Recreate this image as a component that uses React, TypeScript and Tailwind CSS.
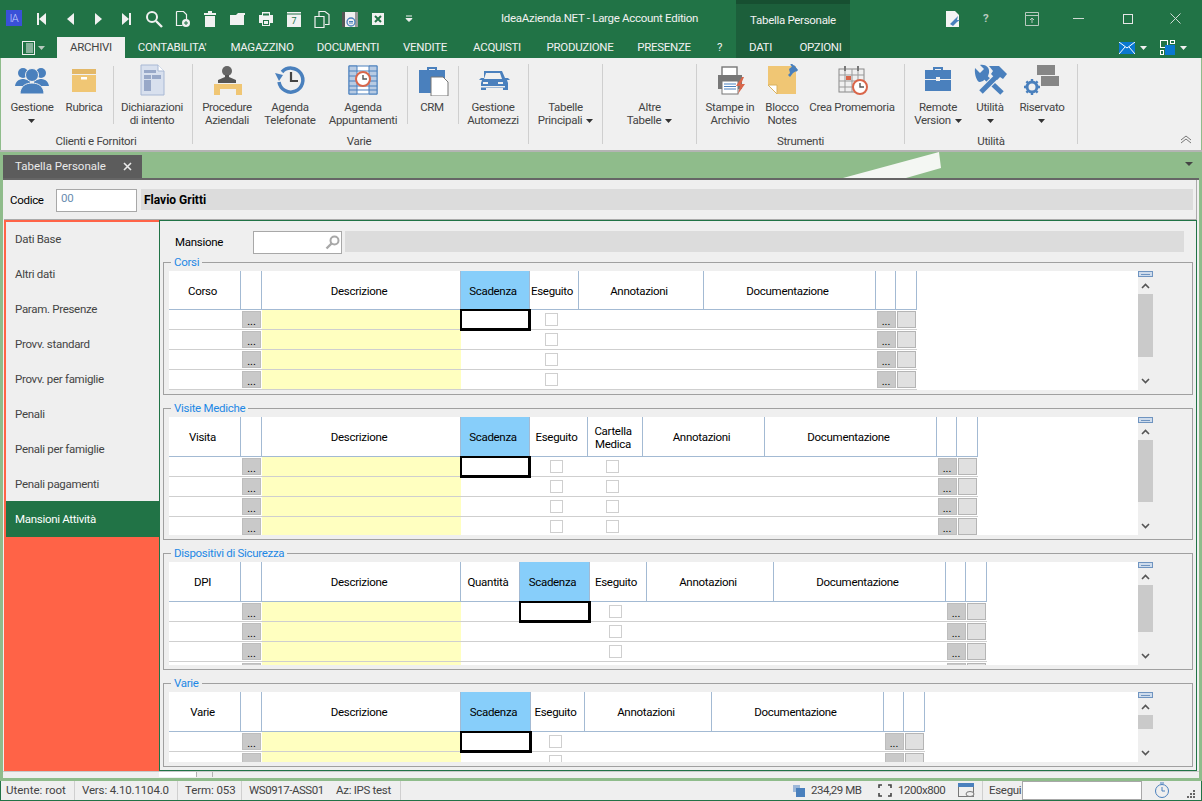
import React from "react";

type Kind = "plain" | "btn" | "yellow" | "date" | "check" | "box";
type Col = { w: number; label?: React.ReactNode; kind: Kind; blue?: boolean };

const Caret = ({ c = "#333" }: { c?: string }) => (
  <svg width="7" height="4" viewBox="0 0 7 4" className="inline-block"><path d="M0 0h7L3.5 4z" fill={c} /></svg>
);

const W = "#f1f1f1";
const TB = ({ children, w = 18 }: { children: React.ReactNode; w?: number }) => (
  <svg width={w} height="18" viewBox="0 0 18 18" className="block">{children}</svg>
);

const tools: React.ReactNode[] = [
  <TB key="a"><rect x="4" y="3" width="2" height="12" fill={W} /><path d="M13 3v12L6 9z" fill={W} /></TB>,
  <TB key="b"><path d="M13 3v12L6 9z" fill={W} /></TB>,
  <TB key="c"><path d="M6 3v12l7-6z" fill={W} /></TB>,
  <TB key="d"><rect x="12" y="3" width="2" height="12" fill={W} /><path d="M5 3v12l7-6z" fill={W} /></TB>,
  <TB key="e"><circle cx="7" cy="7" r="5" fill="none" stroke={W} strokeWidth="2" /><path d="M11 11l6 6" stroke={W} strokeWidth="2.4" /></TB>,
  <TB key="f"><path d="M3.5 1.5h7l3 3v5M3.5 1.5v14h6" fill="none" stroke={W} strokeWidth="1.2" /><circle cx="13" cy="13" r="4" fill={W} /><path d="M11 13h4M13 11v4" stroke="#217346" /></TB>,
  <TB key="g"><rect x="7" y="1" width="4" height="2" fill={W} /><rect x="3" y="3" width="12" height="2" fill={W} /><path d="M4 6h10v11H4z" fill={W} /></TB>,
  <TB key="h"><path d="M1 5h6l2-2h7v2l-1 0v10H1z" fill={W} /></TB>,
  <TB key="i"><path d="M5 2h8v3h3v8h-3v3H5v-3H2V5h3z" fill={W} /><rect x="6" y="3.5" width="6" height="2" fill="#217346" /><rect x="6" y="10" width="6" height="5" fill="#217346" /><rect x="7" y="11" width="4" height="3" fill={W} /></TB>,
  <TB key="j"><path d="M2 2h14v15H2z" fill={W} /><path d="M2 4h14" stroke="#217346" /><text x="9" y="14" fontSize="9" textAnchor="middle" fill="#217346" fontFamily="Roboto">7</text></TB>,
  <TB key="k"><path d="M2 6.5h9v11H2zM6 6V1.5h6l4 3v10h-4" fill="none" stroke={W} strokeWidth="1.2" /></TB>,
  <TB key="l"><rect x="1" y="2" width="16" height="15" fill={W} /><rect x="1" y="2" width="3" height="15" fill="#555" /><rect x="14" y="2" width="3" height="15" fill="#999" /><circle cx="10" cy="12" r="4" fill="none" stroke="#4a80bd" strokeWidth="1.3" /><path d="M8 11.5h4M8 13h4" stroke="#4a80bd" /></TB>,
  <TB key="m"><rect x="3" y="3" width="12" height="12" fill={W} /><path d="M6 6l6 6M12 6l-6 6" stroke="#217346" strokeWidth="2" /></TB>,
];

const B = "#4a80bd";
const T = "#f0c674";
const ICON = ({ children, w = 36, h = 32 }: { children: React.ReactNode; w?: number; h?: number }) => (
  <svg width={w} height={h} viewBox={`0 0 ${w} ${h}`} className="block">{children}</svg>
);

const Icons: Record<string, React.ReactNode> = {
  people: <ICON><circle cx="9" cy="9" r="5" fill={B} /><circle cx="27" cy="9" r="5" fill={B} /><path d="M1 22c1-6 5-7 9-7l6 2v5zM35 22c-1-6-5-7-9-7l-6 2v5z" fill={B} /><circle cx="18" cy="11" r="6.5" fill={B} stroke="#f0f0f0" /><path d="M6 30c0-8 6-11 12-11s12 3 12 11z" fill={B} stroke="#f0f0f0" /></ICON>,
  box: <ICON><rect x="6" y="5" width="24" height="5" fill="#e3b868" /><rect x="6" y="11" width="24" height="17" fill={T} /><rect x="15" y="13" width="6" height="2.5" fill="#fff" /></ICON>,
  doc: <ICON><path d="M7 1h17l6 6v24H7z" fill="#d8e0ee" stroke="#a8b8d4" /><path d="M24 1v6h6" fill="#fff" stroke="#a8b8d4" /><rect x="10" y="6" width="12" height="3" fill="#98a8c8" /><rect x="10" y="11" width="7" height="4" fill="#98a8c8" /><rect x="18" y="11" width="9" height="4" fill="#98a8c8" /><rect x="10" y="16" width="7" height="11" fill="#98a8c8" /></ICON>,
  desk: <ICON><circle cx="18" cy="7" r="5" fill="#666" /><path d="M16 11h4v2l7 3v3H9v-3l7-3z" fill="#555" /><path d="M5 20h28v11h-6v-6H11v6H5z" fill={T} /></ICON>,
  history: <ICON><path d="M10 8a12 12 0 1 1-3 10" fill="none" stroke={B} strokeWidth="3.5" /><path d="M4 11l8 2-4 6z" fill={B} transform="translate(-1 -2)" /><path d="M19 8v9h7" fill="none" stroke="#444" strokeWidth="2.2" /></ICON>,
  sched: <ICON><rect x="4" y="2" width="28" height="28" fill="#fff" stroke={B} /><path d="M4 2h8v28H4zM24 2h8v28h-8z" fill="#b8cbe3" stroke={B} /><path d="M4 7h28M4 12h28M4 17h28M4 22h28M4 26h28" stroke={B} /><circle cx="18" cy="15" r="7" fill="#fff" stroke="#d9664a" strokeWidth="2" /><path d="M18 11v4h4" fill="none" stroke="#555" strokeWidth="1.4" /></ICON>,
  crm: <ICON><path d="M13 3h10v3h-2V5h-6v1h-2z" fill={B} /><rect x="5" y="6" width="26" height="23" fill={B} /><path d="M17 13h12l5 5v14H17z" fill="#fff" stroke="#777" /></ICON>,
  car: <ICON><path d="M9 7h18l3 7h3l2 2h-3l1 3v7h-5v-2H11v2H6v-7l1-3H4l2-2h3z" fill={B} /><path d="M11 9h14l2 6H9z" fill="#f0f0f0" /><rect x="8" y="18" width="5" height="2" fill="#f0f0f0" /><rect x="23" y="18" width="5" height="2" fill="#f0f0f0" /><rect x="6" y="22" width="24" height="1.5" fill="#f0f0f0" /></ICON>,
  printer: <ICON><rect x="10" y="3" width="15" height="9" fill="#fff" stroke="#777" strokeWidth="1.4" /><path d="M6 11h24v14H6z" fill="#777" /><rect x="10" y="17" width="16" height="13" fill="#fff" stroke="#777" /><path d="M12 20h12M12 22.5h12M12 25h12" stroke={B} /><path d="M30 13l-6 9h4l-2 8 7-10h-4l3-7z" fill="#d9664a" /></ICON>,
  note: <ICON><path d="M4 2h28v28H13l-9-9z" fill={T} /><path d="M4 21h9v9z" fill="#fff" stroke="#d9b25e" /><path d="M26 9l-1-4 5-4 4 5-5 3-3 4-2-2z" fill={B} /><path d="M27 0l6 7" stroke={B} strokeWidth="2" /></ICON>,
  cal: <ICON><rect x="5" y="5" width="25" height="23" fill="#f0f0f0" stroke="#888" /><path d="M5 11h25M5 17h25M5 23h25M11 5v23M18 5v23M24 5v23" stroke="#999" /><path d="M11 2v5M24 2v5" stroke="#777" strokeWidth="2" /><rect x="12" y="12" width="5" height="4" fill="#d9664a" /><circle cx="26" cy="23" r="7" fill="#fff" stroke="#d9664a" strokeWidth="2" /><path d="M26 19v4h4" fill="none" stroke="#555" strokeWidth="1.4" /></ICON>,
  case: <ICON><path d="M13 3h10v4h-2V5h-6v2h-2z" fill={B} /><rect x="5" y="6" width="26" height="9" fill={B} /><rect x="5" y="16" width="26" height="11" fill={B} /><rect x="16" y="13" width="4" height="4" fill="#f0f0f0" /></ICON>,
  tools: (
    <ICON>
      <path d="M12 12L30 29" stroke={B} strokeWidth="5" />
      <path d="M3 4l5 5 4-4-4-4c5-1 10 2 9 8l-1 3-5 5-3 1C6 19 2 12 3 4z" fill={B} />
      <path d="M27 10L9 28" stroke="#f0f0f0" strokeWidth="7" />
      <path d="M27 10L9 28" stroke={B} strokeWidth="5" />
      <path d="M17 2h10l8 8-4 5-3-2-3 3-6-6 2-3z" fill={B} />
    </ICON>
  ),
  gear: <ICON><rect x="13" y="1" width="18" height="10" fill="#868686" /><rect x="17" y="12" width="18" height="10" fill="#868686" /><g transform="translate(8 23)"><circle r="5" fill="none" stroke={B} strokeWidth="3" /><path d="M0-8v3M0 5v3M-8 0h3M5 0h3M-5.6-5.6l2 2M3.6 3.6l2 2M-5.6 5.6l2-2M3.6-3.6l2-2" stroke={B} strokeWidth="2.4" /></g></ICON>,
};

const RBtn = ({ w, icon, l1, l2, caret }: { w: number; icon?: string; l1?: string; l2?: string; caret?: "inline" | "below" }) => (
  <div className="flex flex-col items-center" style={{ width: w }}>
    <div className="h-[32px] flex items-center justify-center">{icon ? Icons[icon] : null}</div>
    <div className="mt-[5px] leading-[13px] text-center whitespace-nowrap">
      <div className="h-[13px]">{l1}</div>
      <div className="h-[13px] flex items-center justify-center gap-[4px]">
        {l2}
        {caret ? <Caret /> : null}
      </div>
    </div>
  </div>
);

const RSep = ({ ml = 0, mr = 0 }: { ml?: number; mr?: number }) => (
  <div className="w-px h-[58px] mt-[2px] bg-[#cfcfcf] shrink-0" style={{ marginLeft: ml, marginRight: mr }} />
);

const Group = ({ w, label, labelPr = 0, children }: { w: number; label?: string; labelPr?: number; children: React.ReactNode }) => (
  <div className="h-[80px] mt-[6px] border-r border-[#cfcfcf] flex flex-col shrink-0" style={{ width: w }}>
    <div className="h-[68px] shrink-0 flex items-start">{children}</div>
    <div className="h-[18px] shrink-0 leading-[18px] text-center" style={{ paddingRight: labelPr }}>{label}</div>
  </div>
);

const cols = {
  corsi: [
    { w: 72, label: "Corso", kind: "plain" },
    { w: 21, kind: "btn" },
    { w: 199, label: "Descrizione", kind: "yellow" },
    { w: 69, label: "Scadenza", kind: "date", blue: true },
    { w: 49, label: "Eseguito", kind: "check" },
    { w: 125, label: "Annotazioni", kind: "plain" },
    { w: 172, label: "Documentazione", kind: "plain" },
    { w: 20, kind: "btn" },
    { w: 21, kind: "box" },
  ] as Col[],
  visite: [
    { w: 72, label: "Visita", kind: "plain" },
    { w: 21, kind: "btn" },
    { w: 199, label: "Descrizione", kind: "yellow" },
    { w: 69, label: "Scadenza", kind: "date", blue: true },
    { w: 58, label: "Eseguito", kind: "check" },
    { w: 55, label: <>Cartella<br />Medica</>, kind: "check" },
    { w: 122, label: "Annotazioni", kind: "plain" },
    { w: 172, label: "Documentazione", kind: "plain" },
    { w: 20, kind: "btn" },
    { w: 21, kind: "box" },
  ] as Col[],
  dpi: [
    { w: 72, label: "DPI", kind: "plain" },
    { w: 21, kind: "btn" },
    { w: 199, label: "Descrizione", kind: "yellow" },
    { w: 59, label: "Quantità", kind: "plain" },
    { w: 70, label: "Scadenza", kind: "date", blue: true },
    { w: 57, label: "Eseguito", kind: "check" },
    { w: 127, label: "Annotazioni", kind: "plain" },
    { w: 172, label: "Documentazione", kind: "plain" },
    { w: 20, kind: "btn" },
    { w: 21, kind: "box" },
  ] as Col[],
  varie: [
    { w: 72, label: "Varie", kind: "plain" },
    { w: 21, kind: "btn" },
    { w: 199, label: "Descrizione", kind: "yellow" },
    { w: 70, label: "Scadenza", kind: "date", blue: true },
    { w: 54, label: "Eseguito", kind: "check" },
    { w: 127, label: "Annotazioni", kind: "plain" },
    { w: 172, label: "Documentazione", kind: "plain" },
    { w: 20, kind: "btn" },
    { w: 21, kind: "box" },
  ] as Col[],
};

const Cell = ({ col, first, clipped }: { col: Col; first: boolean; clipped: boolean }) => {
  const base = "h-full shrink-0 relative flex items-center justify-center";
  if (col.kind === "btn")
    return (
      <div className={base} style={{ width: col.w }}>
        <div className="w-[19px] h-[17px] bg-[#c9c9c9] border border-[#bdbdbd] flex items-center justify-center">
          {clipped ? null : <span className="text-[11px] tracking-normal leading-none text-black mt-[4px]">...</span>}
        </div>
      </div>
    );
  if (col.kind === "box")
    return (
      <div className={base} style={{ width: col.w }}>
        <div className="w-[19px] h-[17px] bg-[#e0e0e0] border border-[#b5b5b5]" />
      </div>
    );
  if (col.kind === "yellow") return <div className={`${base} bg-[#ffffc0]`} style={{ width: col.w }} />;
  if (col.kind === "check")
    return (
      <div className={`${base} pr-[6px] pb-px`} style={{ width: col.w }}>
        <div className="w-[13px] h-[13px] bg-white border border-[#cfcfcf]" />
      </div>
    );
  if (col.kind === "date" && first)
    return (
      <div className={base} style={{ width: col.w }}>
        <div className="absolute z-10 left-[-1px] right-[-1px] top-[-1px] bottom-[-2px] border-[2px] border-b-[3px] border-r-[3px] border-black bg-white" />
      </div>
    );
  return <div className={base} style={{ width: col.w }} />;
};

const Grid = ({ columns, rows, h, head }: { columns: Col[]; rows: number; h: number; head: number }) => {
  const total = columns.reduce((a, c) => a + c.w, 0);
  return (
    <div className="flex ml-[5px]">
      <div className="w-[969px] bg-white overflow-hidden" style={{ height: h }}>
        <div className="flex border-b border-[#a3bad3]" style={{ width: total, height: head }}>
          {columns.map((c, i) => (
            <div
              key={i}
              className={`h-full shrink-0 flex items-center justify-center text-center leading-[13px] text-black border-r border-[#a3bad3] pr-[4px] pt-[2px] ${c.blue ? "bg-[#87cefa]" : ""}`}
              style={{ width: c.w }}
            >
              {c.label}
            </div>
          ))}
        </div>
        {Array.from({ length: rows }).map((_, r) => (
          <div key={r} className="flex h-[20px] border-b border-[#cfcfcf]" style={{ width: total }}>
            {columns.map((c, i) => <Cell key={i} col={c} first={r === 0} clipped={head + 20 * (r + 1) > h + 2} />)}
          </div>
        ))}
      </div>
      <div className="w-[15px] flex flex-col items-center relative" style={{ height: h }}>
        <div className="w-[15px] h-[6px] border border-[#6f94c0] bg-[#cfdcec] flex items-center justify-center"><div className="w-[9px] h-px bg-[#6f94c0]" /></div>
        <svg width="9" height="6" viewBox="0 0 9 6" className="mt-[6px] mb-[5px] shrink-0"><path d="M1 5l3.5-3.5L8 5" fill="none" stroke="#555" strokeWidth="1.6" /></svg>
        <div className="w-[15px] bg-[#cacaca] shrink" style={{ height: Math.max(h - 56, 8) }} />
        <svg width="9" height="6" viewBox="0 0 9 6" className="mt-auto mb-[6px] shrink-0"><path d="M1 1l3.5 3.5L8 1" fill="none" stroke="#555" strokeWidth="1.6" /></svg>
      </div>
    </div>
  );
};

const Section = ({ title, h, gh, head, columns, rows }: { title: string; h: number; gh: number; head: number; columns: Col[]; rows: number }) => (
  <div className="relative border border-[#a0a0a0] pt-[8px] shrink-0 w-[1030px]" style={{ height: h }}>
    <div className="absolute left-[7px] top-[-8px] h-[14px] px-[3px] leading-[14px] bg-[#efefef] text-[#1e88e5]">{title}</div>
    <Grid columns={columns} rows={rows} h={gh} head={head} />
  </div>
);

const nav = ["Dati Base", "Altri dati", "Param. Presenze", "Provv. standard", "Provv. per famiglie", "Penali", "Penali per famiglie", "Penali pagamenti", "Mansioni Attività"];
const tabs: [string, number][] = [["CONTABILITA'", 94], ["MAGAZZINO", 86], ["DOCUMENTI", 86], ["VENDITE", 68], ["ACQUISTI", 76], ["PRODUZIONE", 90], ["PRESENZE", 78], ["?", 33]];

export default function App() {
  return (
    <div className="w-[1202px] h-[801px] flex flex-col overflow-hidden bg-[#8fbc8b] text-[11.5px] tracking-[-0.3px] text-[#444] font-['Roboto',sans-serif]">
      {/* title */}
      <div className="h-[37px] bg-[#217346] flex shrink-0 text-[#f1f1f1]">
        <div className="w-[6px]" />
        <div className="w-[16px] h-[16px] mt-[10px] bg-[#3a50d8] flex items-center justify-center text-[11px] font-light text-[#c8d0ff] leading-none">lA</div>
        <div className="flex items-center h-full gap-[10px] ml-[11px]">
          {tools}
          <svg width="18" height="18" viewBox="0 0 18 18" className="ml-[3px]"><path d="M6 6h6M6 8.5h6l-3 3z" stroke="#f1f1f1" fill="#f1f1f1" /></svg>
        </div>
        <div className="w-[318px] pl-[83px] flex items-center justify-start whitespace-nowrap">IdeaAzienda.NET - Large Account Edition</div>
        <div className="w-[114px] h-full bg-[#1c5f3b] border-t-[4px] border-[#174f31] flex items-center justify-center text-[#f1f1f1]">Tabella Personale</div>
        <div className="flex-1 relative flex items-center">
          <svg width="16" height="18" viewBox="0 0 16 18" className="ml-[95px]"><path d="M1 1h9l4 4v12H1z" fill="#f4f4f4" /><path d="M5 14l5-5 3-3-1 4 3 0-3 2-4 4z" fill={B} /></svg>
          <span className="ml-[22px] text-[#b8c9bf] font-bold">?</span>
          <svg width="14" height="14" viewBox="0 0 14 14" className="ml-[37px]"><path d="M.5.5h13v13H.5zM.5 3.5h13M7 11V6M5 8l2-2 2 2" fill="none" stroke="#b8c9bf" /></svg>
          <div className="w-[11px] h-px bg-[#cfd9d3] ml-[34px]" />
          <div className="w-[10px] h-[10px] border border-[#e6e6e6] ml-[39px]" />
          <svg width="11" height="11" viewBox="0 0 11 11" className="ml-[37px]"><path d="M.5.5l10 10M10.5.5l-10 10" stroke="#cfd9d3" /></svg>
        </div>
      </div>
      {/* tabs */}
      <div className="h-[21px] bg-[#217346] flex shrink-0 text-[#f1f1f1]">
        <div className="w-[57px] flex items-center justify-center gap-[2px] pl-[10px]">
          <svg width="14" height="14" viewBox="0 0 14 14"><rect x=".5" y=".5" width="12" height="13" fill="none" stroke="#f1f1f1" /><path d="M4 3h7M4 5h7M4 7h7M4 9h7M4 11h7" stroke="#f1f1f1" /></svg>
          <Caret c="#b8c9bf" />
        </div>
        <div className="w-[68px] bg-[#f0f0f0] text-[#444] flex items-center justify-center">ARCHIVI</div>
        {tabs.map(([t, w]) => (
          <div key={t} className="flex items-center justify-center shrink-0" style={{ width: w }}>{t}</div>
        ))}
        <div className="w-[114px] bg-[#1c5f3b] flex">
          <div className="w-[49px] flex items-center justify-center">DATI</div>
          <div className="w-[65px] pl-[6px] flex items-center justify-center">OPZIONI</div>
        </div>
        <div className="flex-1 flex items-center">
          <svg width="16" height="12" viewBox="0 0 16 12" className="ml-[269px]"><rect width="16" height="12" fill="#0a78d0" /><path d="M0 0l8 6 8-6M0 12l6-7M16 12l-6-7" fill="none" stroke="#fff" /></svg>
          <span className="ml-[5px] flex"><Caret c="#f1f1f1" /></span>
          <svg width="15" height="15" viewBox="0 0 15 15" className="ml-[13px]"><rect x=".5" y=".5" width="7" height="7" fill="none" stroke="#fff" /><rect x="5" y="5" width="10" height="10" fill="#0a78d0" /><rect x=".5" y="10.5" width="3" height="4" fill="none" stroke="#fff" /><rect x="10.5" y=".5" width="4" height="3" fill="none" stroke="#fff" /></svg>
          <span className="ml-[5px] flex"><Caret c="#f1f1f1" /></span>
        </div>
      </div>
      {/* ribbon */}
      <div className="h-[92px] mx-px pl-[2px] bg-[#f0f0f0] flex shrink-0 relative">
        <Group w={190} label="Clienti e Fornitori" labelPr={3}>
          <RBtn w={58} icon="people" l1="Gestione" caret="below" />
          <RBtn w={46} icon="box" l1="Rubrica" />
          <RSep ml={6} />
          <RBtn w={76} icon="doc" l1="Dichiarazioni" l2="di intento" />
        </Group>
        <Group w={336} label="Varie" labelPr={3}>
          <RBtn w={68} icon="desk" l1="Procedure" l2="Aziendali" />
          <RBtn w={58} icon="history" l1="Agenda" l2="Telefonate" />
          <RBtn w={88} icon="sched" l1="Agenda" l2="Appuntamenti" />
          <RSep />
          <RBtn w={48} icon="crm" l1="CRM" />
          <RSep ml={2} />
          <RBtn w={68} icon="car" l1="Gestione" l2="Automezzi" />
        </Group>
        <Group w={74}>
          <RBtn w={73} l1="Tabelle" l2="Principali" caret="inline" />
        </Group>
        <Group w={94}>
          <RBtn w={93} l1="Altre" l2="Tabelle" caret="inline" />
        </Group>
        <Group w={208} label="Strumenti">
          <RBtn w={66} icon="printer" l1="Stampe in" l2="Archivio" />
          <RBtn w={38} icon="note" l1="Blocco" l2="Notes" />
          <RBtn w={102} icon="cal" l1="Crea Promemoria" />
        </Group>
        <Group w={173} label="Utilità">
          <RBtn w={66} icon="case" l1="Remote" l2="Version" caret="inline" />
          <RBtn w={38} icon="tools" l1="Utilità" caret="below" />
          <RBtn w={66} icon="gear" l1="Riservato" caret="below" />
        </Group>
        <svg width="12" height="9" viewBox="0 0 12 9" className="absolute left-[1179px] top-[77px]"><path d="M1 5l5-4 5 4M1 8l5-4 5 4" fill="none" stroke="#777" /></svg>
      </div>
      <div className="h-[2px] bg-[#b4b4b4] shrink-0" />
      {/* document tab bar */}
      <div className="h-[26px] relative flex items-end pl-[3px] shrink-0">
        <div className="w-[139px] h-[23px] bg-[#5c5c5c] text-[#eaeaea] tracking-normal flex items-center pl-[12px]">
          <span>Tabella Personale</span>
          <svg width="9" height="9" viewBox="0 0 9 9" className="ml-[17px]"><path d="M1 1l7 7M8 1l-7 7" stroke="#eaeaea" strokeWidth="1.6" /></svg>
        </div>
        <svg width="1202" height="26" viewBox="0 0 1202 26" className="absolute left-0 top-0 pointer-events-none"><path d="M843 26L939 0l2 16-35 10z" fill="#f4f7f3" /><path d="M1185 10h8l-4 4z" fill="#444" /></svg>
      </div>
      {/* frame */}
      <div className="h-[600px] mx-[3px] border-t-2 border-[#666] bg-[#efefef] flex flex-col shrink-0">
        <div className="h-[40px] ml-px mr-[2px] pt-[9px] border-b border-r border-[#aaaaaa] flex items-start shrink-0 text-black">
          <span className="ml-[6px] w-[46px] leading-[23px]">Codice</span>
          <div className="w-[81px] h-[23px] bg-white border border-[#a8a8a8] pl-[4px] text-[#6a8db0] leading-[16px]">00</div>
          <div className="ml-[4px] w-[1052px] h-[21px] bg-[#dcdcdc] pl-[3px] font-bold text-[12px] tracking-normal leading-[22px]">Flavio Gritti</div>
        </div>
        <div className="h-[551px] ml-px mr-[2px] flex shrink-0">
          <div className="w-[155px] border-l-2 border-t-2 border-[#ff6347] bg-[#ff6347] shrink-0">
            {nav.map((n, i) => (
              <div key={n} className={`flex items-center pl-[9px] ${i === 8 ? "h-[36px] pt-px bg-[#217346] text-white mt-[-1px]" : "h-[35px] bg-[#efefef]"}`}>{n}</div>
            ))}
          </div>
          <div className="flex-1 border border-[#217346] pl-[3px] flex flex-col gap-[13px]">
            <div className="flex items-start h-[28px] pt-[10px] text-black shrink-0">
              <span className="ml-[12px] w-[78px] leading-[23px]">Mansione</span>
              <div className="w-[89px] h-[23px] bg-white border border-[#a8a8a8] flex items-center justify-end pr-[1px]">
                <svg width="15" height="15" viewBox="0 0 15 15"><circle cx="9.5" cy="5.5" r="4" fill="none" stroke="#a8a8a8" strokeWidth="2" /><path d="M6.5 8.5L1.5 13.5" stroke="#a8a8a8" strokeWidth="2.4" /></svg>
              </div>
              <div className="ml-[3px] w-[839px] h-[21px] bg-[#dcdcdc]" />
            </div>
            <Section title="Corsi" h={133} gh={119} head={39} columns={cols.corsi} rows={4} />
            <Section title="Visite Mediche" h={132} gh={118} head={40} columns={cols.visite} rows={4} />
            <Section title="Dispositivi di Sicurezza" h={117} gh={103} head={40} columns={cols.dpi} rows={4} />
            <Section title="Varie" h={84} gh={70} head={40} columns={cols.varie} rows={2} />
          </div>
        </div>
        <div className="flex-1 flex bg-[#efefef] border-t border-[#c8c8c8]">
          <div className="ml-[156px] w-[38px] h-[5px] bg-white border-r border-[#b0b0b0]" />
          <div className="w-[16px] h-[5px] border-r border-[#b0b0b0]" />
        </div>
      </div>
      <div className="h-[3px] shrink-0" />
      {/* status */}
      <div className="h-[20px] bg-[#efefef] border-b border-[#217346] border-x flex items-center shrink-0 text-[#444] whitespace-nowrap">
        <div className="w-[74px] h-full pl-[5px] flex items-center tracking-normal border-r border-[#cfcfcf]">Utente: root</div>
        <div className="w-[103px] h-full pl-[7px] flex items-center tracking-[-0.15px] border-r border-[#cfcfcf]">Vers: 4.10.1104.0</div>
        <div className="w-[64px] h-full pl-[7px] flex items-center tracking-[-0.1px] border-r border-[#cfcfcf]">Term: 053</div>
        <div className="w-[159px] h-full pl-[7px] flex items-center border-r border-[#cfcfcf]">
          <span className="w-[87px] tracking-[-0.45px]">WS0917-ASS01</span><span>Az: IPS test</span>
        </div>
        <svg width="12" height="12" viewBox="0 0 12 12" className="ml-[392px]"><rect x="0" y="0" width="7" height="7" fill="#9db8d9" /><rect x="3" y="3" width="9" height="9" fill={B} /></svg>
        <span className="ml-[6px] w-[50px] tracking-[-0.45px]">234,29 MB</span>
        <svg width="14" height="13" viewBox="0 0 14 13" className="ml-[17px]"><path d="M1 4V1h3M10 1h3v3M1 9v3h3M10 12h3V9" fill="none" stroke="#444" strokeWidth="1.6" /></svg>
        <span className="ml-[6px] w-[47px] tracking-[-0.45px]">1200x800</span>
        <svg width="17" height="15" viewBox="0 0 17 15" className="ml-[13px]"><rect x=".5" y=".5" width="15" height="13" fill="none" stroke="#777" /><rect width="16" height="4" fill={B} /><ellipse cx="12" cy="11" rx="4" ry="2.5" fill="#f0f0f0" stroke="#777" /></svg>
        <div className="w-px h-full bg-[#cfcfcf] ml-[7px]" />
        <span className="ml-[6px] w-[33px]">Esegui</span>
        <div className="w-[120px] h-[19px] bg-white border border-[#a8a8a8]" />
        <svg width="16" height="17" viewBox="0 0 16 17" className="ml-[12px]"><circle cx="8" cy="9" r="6.5" fill="none" stroke={B} /><path d="M8 5v4h3M6 1h4" fill="none" stroke={B} /></svg>
        <svg width="8" height="8" viewBox="0 0 8 8" className="ml-[17px] mt-[6px]"><path d="M6 0h2v2H6zM3 3h2v2H3zM6 3h2v2H6zM0 6h2v2H0zM3 6h2v2H3zM6 6h2v2H6z" fill="#666" /></svg>
      </div>
    </div>
  );
}
